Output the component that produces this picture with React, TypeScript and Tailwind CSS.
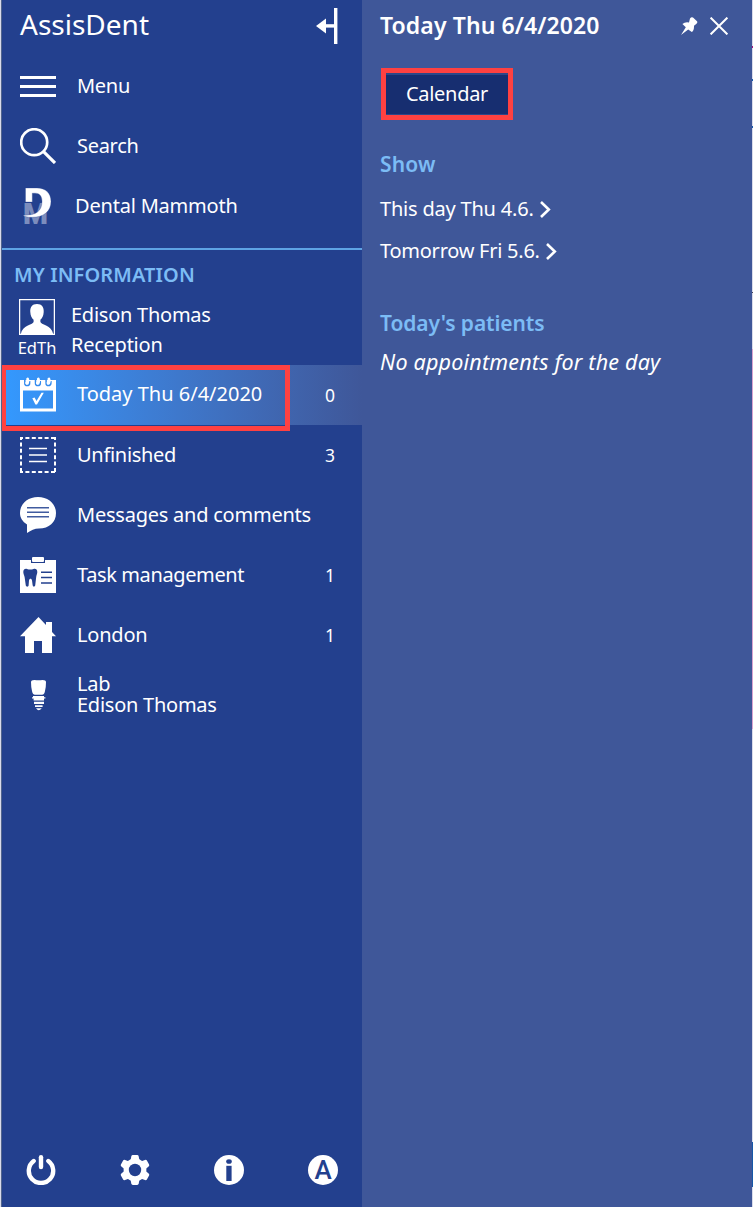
import type { ReactNode } from "react";

const BLUE = "#23408e";

function CollapseIcon() {
  return (
    <svg width="22" height="36" viewBox="0 0 22 36" fill="#fff">
      <rect x="18" y="0" width="3.4" height="36" />
      <rect x="8" y="16.2" width="11" height="3.4" />
      <path d="M0 18 10 10.5V25.5Z" />
    </svg>
  );
}

function MenuIcon() {
  return (
    <svg width="36" height="36" viewBox="0 0 36 36" fill="#fff">
      <rect y="8" width="36" height="3" />
      <rect y="17" width="36" height="3" />
      <rect y="26" width="36" height="3" />
    </svg>
  );
}

function SearchIcon() {
  return (
    <svg width="36" height="36" viewBox="0 0 36 36" fill="none" stroke="#fff">
      <circle cx="14.2" cy="14.2" r="13" strokeWidth="2.7" />
      <path d="M23.3 23.3 35 35" strokeWidth="3.2" />
    </svg>
  );
}

function MammothIcon() {
  return (
    <svg width="36" height="36" viewBox="0 0 36 36" className="overflow-visible">
      <text x="3" y="36" fontFamily="Roboto" fontWeight="900" fontSize="29" textLength="25" lengthAdjust="spacingAndGlyphs" fill="#7c8dbd">
        M
      </text>
      <path
        d="M5.5 0H17C25.5 0 31 5 31 13.5C31 23.5 23.5 29.5 11.5 29.3C8 29.3 4.5 28.5 3 27.2C15.5 27.6 22 23.5 22 13.5C22 8.5 20 5.2 15 5.2H12.3V14H5.5Z"
        fill="#fff"
        stroke={BLUE}
        strokeWidth=".3"
      />
    </svg>
  );
}

function PersonIcon() {
  return (
    <svg width="36" height="36" viewBox="0 0 36 36" fill="none">
      <rect x=".6" y=".6" width="34.8" height="34.8" stroke="#fff" strokeWidth="1.3" />
      <path
        d="M18 5C13 5 11 8.5 11.3 13C11.5 17 12.8 19 14.6 20.8V23C13.5 26 3.5 26 1.8 35H34.2C32.5 26 22.5 26 21.4 23V20.8C23.2 19 24.5 17 24.7 13C25 8.5 23 5 18 5Z"
        fill="#fff"
      />
    </svg>
  );
}

function CalendarIcon() {
  return (
    <svg width="36" height="36" viewBox="0 0 36 36" fill="none">
      <path d="M0 3H36V34.4H0ZM3 13.4V31.4H33V13.4Z" fill="#fff" fillRule="evenodd" />
      {[7, 17.7, 28.3].map((x) => (
        <g key={x}>
          <path d={`M${x - 2.2} 2.8V6.2A2.4 2.4 0 0 0 ${x + 2.6} 6.2V4`} stroke="#338bef" strokeWidth="1.5" />
          <path d={`M${x - 0.3} 6C${x + 1.2} 5.2 ${x + 1.2} 3.6 ${x + 0.6} 2`} stroke="#fff" strokeWidth="2.8" strokeLinecap="round" />
        </g>
      ))}
      <path d="M12.3 21.2 14.6 20.6 16.5 24 21.5 15.7H23.8L17 27.6H15.4Z" fill="#fff" />
    </svg>
  );
}

function UnfinishedIcon() {
  return (
    <svg width="36" height="36" viewBox="0 0 36 36" fill="none" stroke="#fff">
      <path d="M0 1H36M0 35H36" strokeWidth="2" strokeDasharray="4 2.4" strokeDashoffset="1" />
      <path d="M1 0V36M35 0V36" strokeWidth="2" strokeDasharray="4 2.4" strokeDashoffset="1" />
      <path d="M9 11.5H27M9 18H27M9 24.5H27" strokeWidth="1.6" />
    </svg>
  );
}

function MessagesIcon() {
  return (
    <svg width="36" height="36" viewBox="0 0 36 36">
      <path d="M18 0C28 0 36 6.5 36 16C36 25.5 29 31.5 19 31.5C14.5 31.5 11 33.5 7 36V27.5C2.5 24.5 0 21 0 16C0 6.5 8 0 18 0Z" fill="#fff" />
      <path d="M7 10.8H29M7 15.2H29M7 19.8H29" stroke="#405b9f" strokeWidth="1.6" />
    </svg>
  );
}

function TaskIcon() {
  return (
    <svg width="36" height="36" viewBox="0 0 36 36">
      <path d="M0 3H11V6H25V3H36V36H0Z" fill="#fff" />
      <rect x="12" y="0" width="12" height="5" rx="1" fill="#fff" />
      <path
        d="M3.3 15C3.3 12 5.3 11.6 7 12C9 12.7 11.5 12.7 13.5 12C15.5 11.4 17.3 12.2 17.3 15C17.3 17 16.4 18 16.2 20L15.2 28.5C14.8 30 13 30 12.7 28.5L12 23.5C11.6 21 9.4 21 9 23.5L8.6 28.5C8.4 30 6.2 30 5.8 28.5L4.6 20C4.2 18 3.3 17 3.3 15Z"
        fill={BLUE}
      />
      <path d="M21 15.2H32M21 20.6H32M21 26H32" stroke={BLUE} strokeWidth="1.5" />
    </svg>
  );
}

function HouseIcon() {
  return (
    <svg width="36" height="36" viewBox="0 0 36 36" fill="#fff">
      <path d="M18.5 0 26 8V5H32V15L36 19.2H32V36H22V24H14V36H5V19.2H0Z" />
    </svg>
  );
}

function ImplantIcon() {
  return (
    <svg width="36" height="36" viewBox="0 0 36 36" fill="#fff">
      <path d="M11 5Q11 3.2 14.5 3Q18.5 3.7 22.5 3Q26 3.2 26 5Q26 10 25 14Q24.5 17.7 22 17.7H15Q12.5 17.7 12 14Q11 10 11 5ZM13 19H24V20.2H25.4V21.6H24V23.6H13.6V21.6H12V20.2H13ZM14 24.8H24V27H14ZM15 28.2H22.6V30H15ZM16 31.2H21.8Q20 33.2 18.7 33.2Q17.5 33.2 16 31.2Z" />
    </svg>
  );
}

function PowerIcon() {
  return (
    <svg width="30" height="30" viewBox="0 0 30 30" fill="none" stroke="#fff" strokeWidth="4.4" strokeLinecap="round">
      <path d="M15 2.3V12" />
      <path d="M7.7 6A12.2 12.2 0 1 0 22.3 6" />
    </svg>
  );
}

function GearIcon() {
  return (
    <svg width="30" height="30" viewBox="0 0 30 30">
      <g fill="#fff">
        <circle cx="15" cy="15" r="11.4" />
        {[0, 60, 120, 180, 240, 300].map((a) => (
          <path key={a} transform={`rotate(${a} 15 15)`} d="M10.3 6.5 11.3 1.4Q11.6 0 12.8 0H17.2Q18.4 0 18.7 1.4L19.7 6.5Z" />
        ))}
      </g>
      <circle cx="15" cy="15" r="6.2" fill={BLUE} />
    </svg>
  );
}

function InfoIcon() {
  return (
    <svg width="30" height="30" viewBox="0 0 30 30">
      <circle cx="15" cy="15" r="15" fill="#fff" />
      <ellipse cx="15" cy="6.5" rx="2.8" ry="2.3" fill={BLUE} />
      <path d="M12.3 10.8H17.6V26H12.3Z" fill={BLUE} />
    </svg>
  );
}

function PinIcon() {
  return (
    <svg width="17" height="18" viewBox="0 0 17 18" fill="#fff">
      <path d="M9 1.6Q10.4 -.3 12 .6L16 4.3Q17 5.8 15.2 7L13 8.8Q13.2 13.6 10.8 15L7.2 12.4 0 18 4.8 10.3 1.4 7Q4 4.6 8 5.4Z" />
    </svg>
  );
}

function CloseIcon() {
  return (
    <svg width="18" height="18" viewBox="0 0 18 18" stroke="#fff" strokeWidth="2">
      <path d="M.6.6 17.4 17.4M17.4.6.6 17.4" />
    </svg>
  );
}

function Chevron() {
  return (
    <svg width="11" height="17" viewBox="0 0 11 17" fill="none" stroke="#fff" strokeWidth="2.6">
      <path d="M1 1 8.8 8.5 1 16" />
    </svg>
  );
}

type RowProps = { icon: ReactNode; label: string; track: string; count?: string; className?: string };

function Row({ icon, label, track, count, className = "" }: RowProps) {
  return (
    <div className={`flex h-[60px] items-center pl-[18px] ${className}`}>
      <span className="mr-[19px] w-9 shrink-0">{icon}</span>
      <span className={`grow whitespace-nowrap ${track}`}>{label}</span>
      {count && <span className="mr-[27px] text-[17.5px]">{count}</span>}
    </div>
  );
}

export default function App() {
  return (
    <div className="flex h-[1207px] w-[753px] overflow-hidden bg-[#d9dbea] font-['Noto_Sans',sans-serif] text-[20px] leading-[30px] text-white">
      <aside className="relative ml-px flex w-[361px] shrink-0 flex-col border-l border-[#52658d] bg-[#23408e]">
        <header className="flex h-14 justify-between pl-[18px] pr-[24px]">
          <h1 className="mt-1 text-[28px] leading-[40px]">AssisDent</h1>
          <span className="mt-2">
            <CollapseIcon />
          </span>
        </header>
        <Row icon={<MenuIcon />} label="Menu" track="pl-[2px] tracking-[-0.3px]" />
        <Row icon={<SearchIcon />} label="Search" track="pl-[2px] tracking-[-0.3px]" />
        <Row icon={<MammothIcon />} label="Dental Mammoth" track="tracking-[-0.2px]" />
        <div className="mt-3 h-[2px] bg-[#5ea4e5]" />
        <h2 className="mt-[10px] pl-3 font-semibold tracking-[0.1px] text-[#7cbcf5]">MY INFORMATION</h2>
        <div className="mt-[9px] flex h-[66px] pl-[15px]">
          <div className="flex w-[40px] flex-col items-center">
            <PersonIcon />
            <span className="text-[16.5px] leading-[26px]">EdTh</span>
          </div>
          <div className="mt-px ml-[14px] whitespace-nowrap tracking-[-0.25px]">
            <div>Edison Thomas</div>
            <div>Reception</div>
          </div>
        </div>
        <Row
          icon={<CalendarIcon />}
          label="Today Thu 6/4/2020"
          track="-mt-[2px] pl-[2px]"
          count="0"
          className="bg-linear-to-r from-[#3399ff] to-[#3f5799]"
        />
        <Row icon={<UnfinishedIcon />} label="Unfinished" track="pl-[2px] tracking-[-0.3px]" count="3" />
        <Row icon={<MessagesIcon />} label="Messages and comments" track="pl-[2px] tracking-[-0.23px]" />
        <Row icon={<TaskIcon />} label="Task management" track="pl-[2px] tracking-[-0.38px]" count="1" />
        <Row icon={<HouseIcon />} label="London" track="pl-[2px] tracking-[-0.2px]" count="1" />
        <div className="flex h-[60px] items-center pl-[18px]">
          <ImplantIcon />
          <div className="-mt-[2px] ml-[21px] whitespace-nowrap leading-[21px] tracking-[-0.25px]">
            <div>Lab</div>
            <div>Edison Thomas</div>
          </div>
        </div>
        <footer className="mt-auto mb-[22px] flex justify-between pl-6 pr-6">
          <PowerIcon />
          <GearIcon />
          <InfoIcon />
          <span className="flex h-[30px] w-[30px] items-center justify-center rounded-full bg-white font-['Roboto',sans-serif] text-[26px] font-medium text-[#23408e]">
            A
          </span>
        </footer>
        <div className="absolute top-[365px] left-0 h-[66px] w-[288px] border-[5px] border-l-4 border-[#ff4141]" />
      </aside>
      <main className="flex w-[390px] shrink-0 flex-col bg-[#3f5799] pl-[18px]">
        <header className="flex h-[50px] items-center">
          <h2 className="grow text-[23px] font-semibold tracking-[0.1px]">Today Thu 6/4/2020</h2>
          <span className="mt-[2px]">
            <PinIcon />
          </span>
          <span className="mt-[2px] mr-6 ml-3">
            <CloseIcon />
          </span>
        </header>
        <button className="mt-[18px] ml-px flex h-[52px] w-[132px] items-center justify-center border-[5px] border-[#ff4141] bg-[#172e70] tracking-[-0.3px] shadow-[inset_0_2px_0_#2d4788,inset_0_-1px_0_#2d4788]">
          Calendar
        </button>
        <h3 className="mt-[29px] text-[21px] font-semibold tracking-[0.2px] text-[#7cbcf5]">Show</h3>
        <a className="mt-[15px] flex items-center gap-[6px] tracking-[-0.2px]">
          This day Thu 4.6. <Chevron />
        </a>
        <a className="mt-[12px] flex items-center gap-[6px] tracking-[-0.25px]">
          Tomorrow Fri 5.6. <Chevron />
        </a>
        <h3 className="mt-[42px] text-[21px] font-semibold tracking-[-0.1px] text-[#7cbcf5]">Today's patients</h3>
        <p className="mt-[9px] text-[21.5px] tracking-[0.2px] italic">No appointments for the day</p>
      </main>
      <div className="flex w-px flex-col">
        <i className="mt-[46px] h-[2px] bg-[#a3127c]" />
        <i className="mt-[31px] h-[2px] bg-[#1558a8]" />
        <i className="mt-[45px] h-[2px] bg-[#1558a8]" />
        <i className="mt-[164px] h-px bg-[#445]" />
        <i className="mt-[56px] h-[380px] bg-[#d9a3d0]" />
        <i className="mt-auto mb-5 h-[45px] bg-[#1558a8]" />
      </div>
    </div>
  );
}
